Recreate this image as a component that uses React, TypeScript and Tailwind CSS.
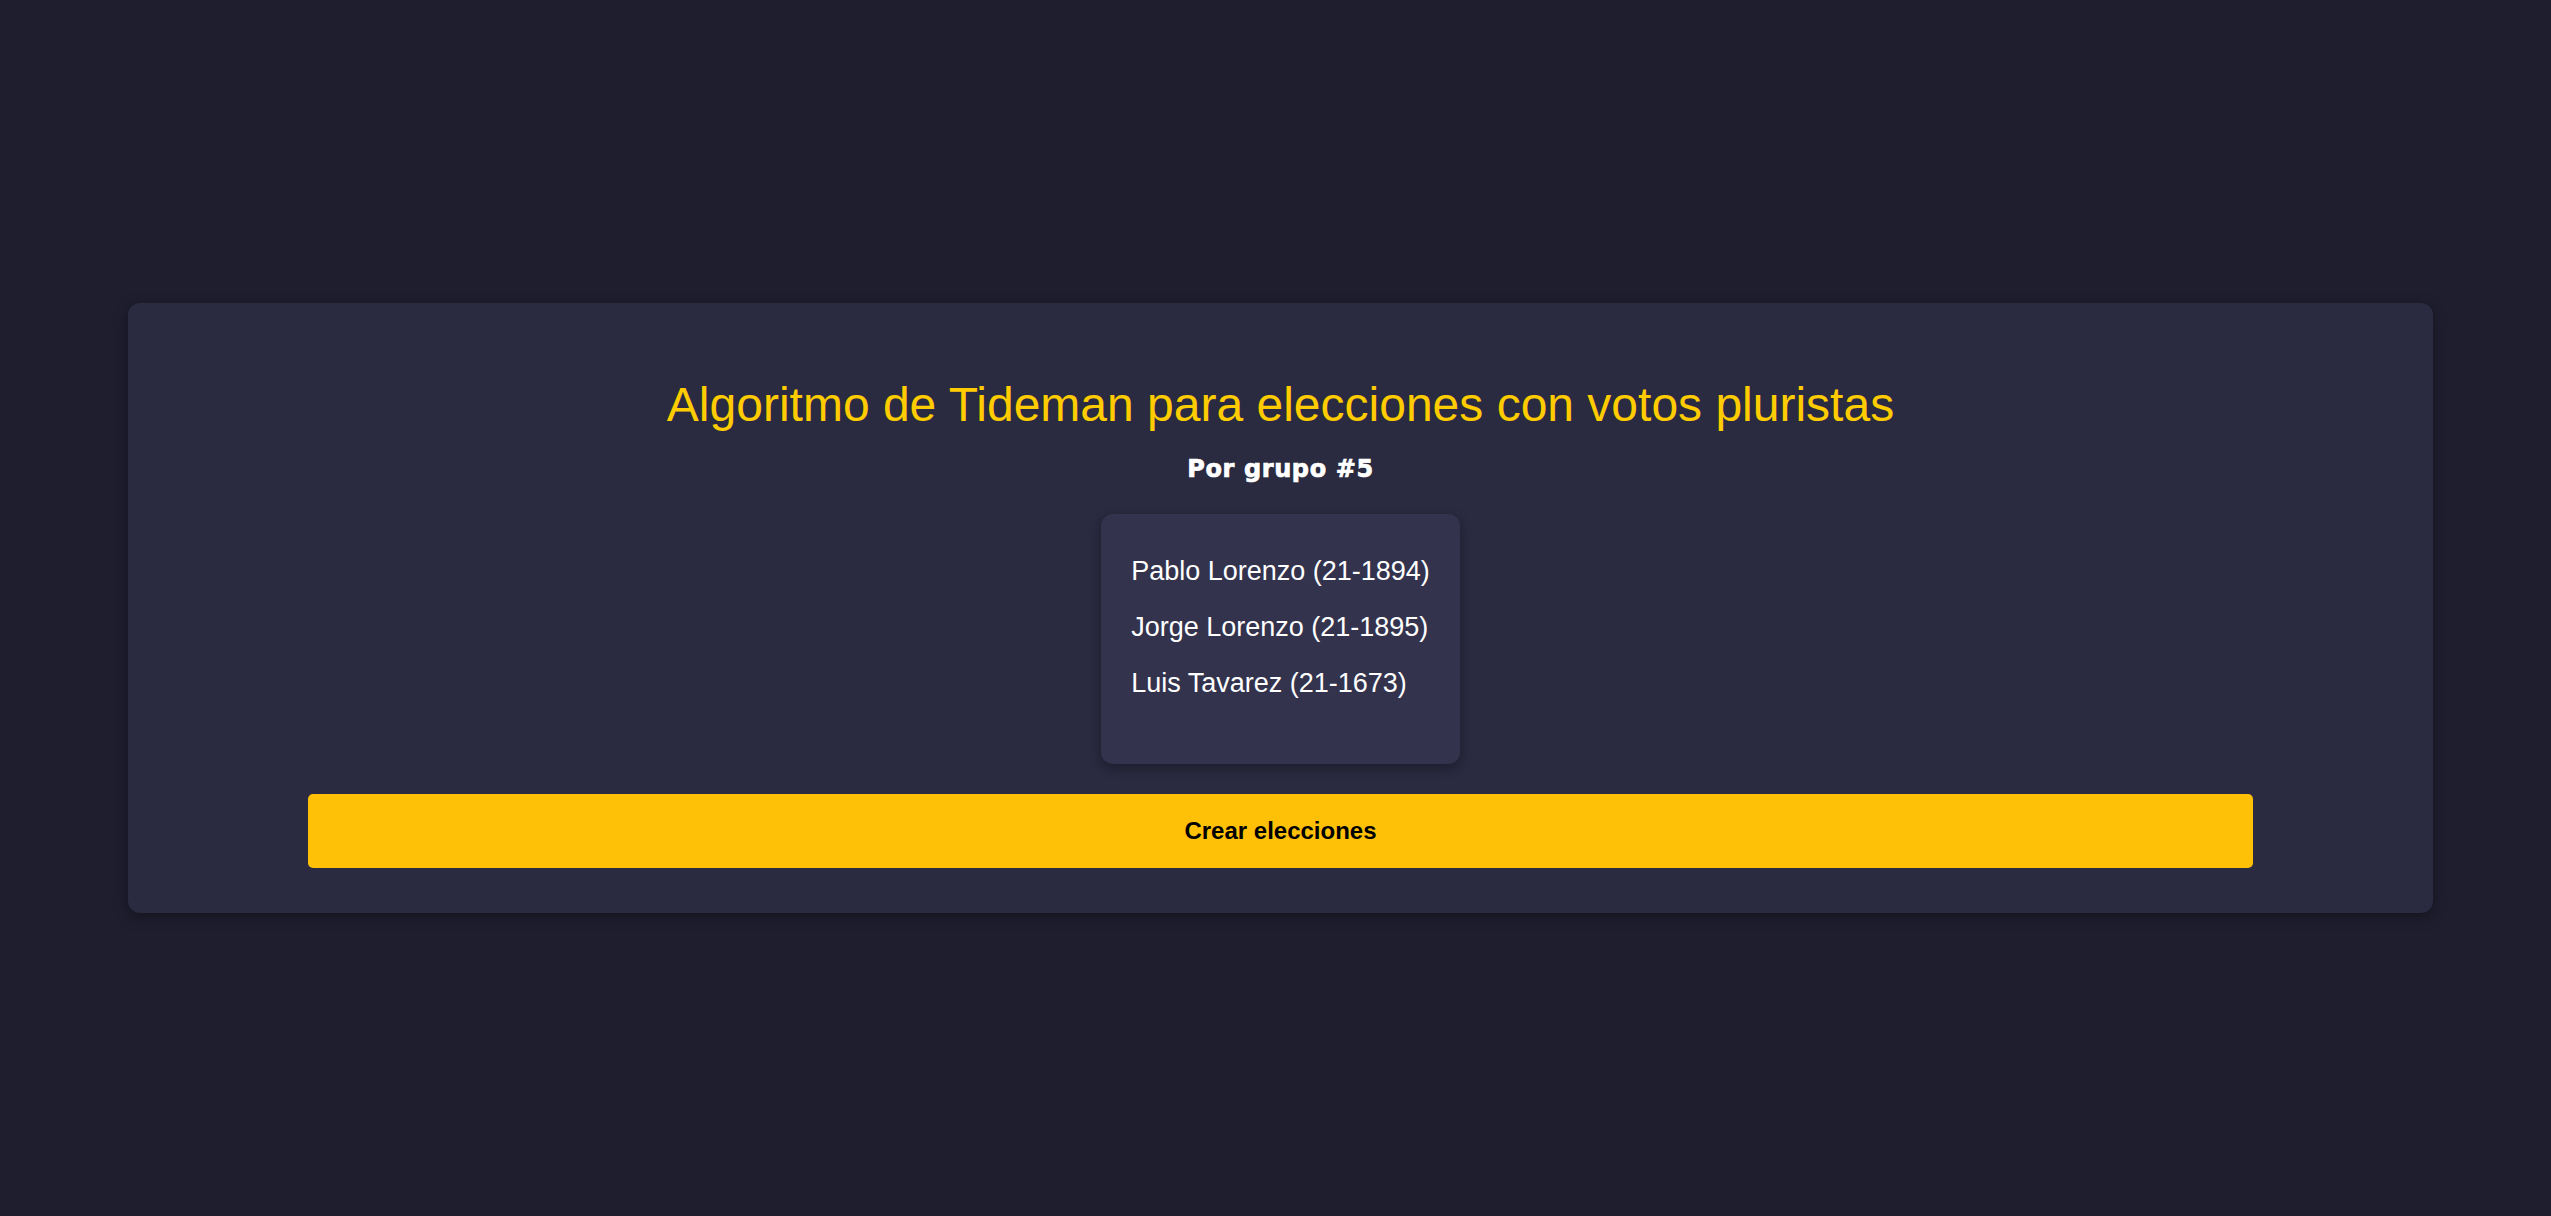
import React from "react";

const members = ["Pablo Lorenzo (21-1894)", "Jorge Lorenzo (21-1895)", "Luis Tavarez (21-1673)"];

export default function App() {
    return (
        <div className="min-h-[1216px] w-full bg-[#1e1e2f] flex items-center font-['Liberation_Sans',Arial,sans-serif]">
            <div className="ml-[128px] w-[2305px] rounded-[12px] bg-[#2a2a40] shadow-[0_4px_14px_rgba(0,0,0,0.35)] pt-[74px] pb-[45px] flex flex-col items-center">
                <h1 className="text-[48px] leading-[56px] text-[#ffcc00] font-normal">
                    Algoritmo de Tideman para elecciones con votos pluristas
                </h1>
                <h2 className="mt-[20px] text-[24px] leading-[32px] tracking-[0.6px] text-white font-bold font-['DejaVu_Sans',sans-serif] [-webkit-text-stroke:0.7px_white]">
                    Por grupo #5
                </h2>
                <ul className="mt-[29px] h-[250px] rounded-[12px] bg-[#33334d] shadow-[0_4px_12px_rgba(0,0,0,0.3)] px-[30px] pt-[41px] flex flex-col gap-[24px]">
                    {members.map((m) => (
                        <li key={m} className="text-[27px] leading-[32px] text-white">
                            {m}
                        </li>
                    ))}
                </ul>
                <button className="mt-[30px] self-stretch mx-[180px] h-[74px] rounded-[5px] bg-[#ffc107] text-black text-[24px] font-bold">
                    Crear elecciones
                </button>
            </div>
        </div>
    );
}
